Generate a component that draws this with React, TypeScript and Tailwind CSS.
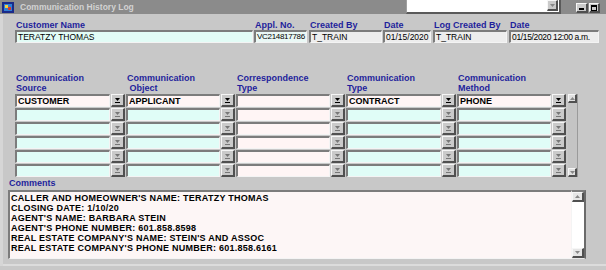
import React from 'react'

const LABEL = 'text-[9px] font-bold leading-[10px] text-[#1f1f9c]'
const SUNKEN = 'border-t-2 border-l-2 border-b border-r border-t-[#7c7c7c] border-l-[#7c7c7c] border-b-[#f4f4f4] border-r-[#f4f4f4]'
const RAISED = 'border-t border-l border-b-2 border-r-2 border-t-[#f6f6f6] border-l-[#f6f6f6] border-b-[#505050] border-r-[#505050] bg-[#cacaca]'

const HEADER_FIELDS = [
    { label: 'Customer Name', value: 'TERATZY THOMAS', ml: 'ml-[12px]', w: 'w-[238px]', bg: 'bg-[#e2fcf6]', text: 'text-[8.5px]' },
    { label: 'Appl. No.', value: 'VC214817786', ml: 'ml-[1px]', w: 'w-[53px]', bg: 'bg-[#eaf8f5]', text: 'text-[8px] tracking-[-0.3px]' },
    { label: 'Created By', value: 'T_TRAIN', ml: 'ml-[2px]', w: 'w-[73px]', bg: 'bg-[#ededed]', text: 'text-[8.5px]' },
    { label: 'Date', value: '01/15/2020', ml: 'ml-[1px]', w: 'w-[48px]', bg: 'bg-[#ededed]', text: 'text-[8.5px]' },
    { label: 'Log Created By', value: 'T_TRAIN', ml: 'ml-[2px]', w: 'w-[74px]', bg: 'bg-[#ededed]', text: 'text-[8.5px]' },
    { label: 'Date', value: '01/15/2020 12:00 a.m.', ml: 'ml-[2px]', w: 'w-[90px]', bg: 'bg-[#ededed]', text: 'text-[8.5px] tracking-[-0.35px]' },
]

const COLUMNS = [
    { top: 'Communication', bottom: 'Source', first: 'CUSTOMER', w: 'w-[111px]', cyan: true },
    { top: 'Communication', bottom: '\u00a0Object', first: 'APPLICANT', w: 'w-[110px]', cyan: true },
    { top: 'Correspondence', bottom: 'Type', first: '', w: 'w-[110px]', cyan: false },
    { top: 'Communication', bottom: 'Type', first: 'CONTRACT', w: 'w-[111px]', cyan: true },
    { top: 'Communication', bottom: 'Method', first: 'PHONE', w: 'w-[110px]', cyan: true },
]

const COMMENTS = [
    "CALLER AND HOMEOWNER'S NAME: TERATZY THOMAS",
    'CLOSING DATE: 1/10/20',
    "AGENT'S NAME: BARBARA STEIN",
    "AGENT'S PHONE NUMBER: 601.858.8598",
    "REAL ESTATE COMPANY'S NAME: STEIN'S AND ASSOC",
    "REAL ESTATE COMPANY'S PHONE NUMBER: 601.858.6161",
]

const DropArrow = ({ active }: { active: boolean }) => (
    <svg width="7" height="7" viewBox="0 0 7 7">
        <path d="M1 1h5L3.5 4z" fill={active ? '#000' : '#777'} />
        <rect x="1" y="5" width="5" height="1" fill={active ? '#000' : '#777'} />
    </svg>
)

const ScrollArrow = ({ up }: { up: boolean }) => (
    <svg width="5" height="3" viewBox="0 0 5 3">
        <path d={up ? 'M0 3h5L2.5 0z' : 'M0 0h5L2.5 3z'} fill="#888" />
    </svg>
)

export default function App() {
    return (
        <div className="relative h-[270px] w-[606px] overflow-hidden bg-[#c8c8c8] font-['Liberation_Sans',Arial,sans-serif]">
            {/* title bar */}
            <div className="flex h-[14px] items-center bg-[#8b8b8b] pl-[2px] pr-[6px]">
                <svg width="12" height="11" viewBox="0 0 12 11">
                    <rect x="0" y="0" width="12" height="11" fill="#1a2a8a" />
                    <rect x="2" y="2" width="8" height="7" fill="#2f7fd6" />
                    <rect x="3" y="3" width="3" height="3" fill="#f4d03a" />
                    <rect x="6" y="5" width="3" height="3" fill="#d83a2a" />
                </svg>
                <span className="ml-[6px] text-[8.5px] font-bold text-[#d2d2d2]">Communication History Log</span>
                <div className="ml-auto flex gap-[1px] pt-[2px]">
                    <div className={`flex h-[10px] w-[12px] items-end justify-center pb-[1px] ${RAISED}`}>
                        <div className="h-[2px] w-[5px] bg-black" />
                    </div>
                    <div className={`flex h-[10px] w-[11px] items-center justify-center ${RAISED}`}>
                        <div className="h-[6px] w-[6px] border border-t-2 border-black" />
                    </div>
                </div>
            </div>

            {/* dropdown list lying over the title bar */}
            <div className="absolute left-[406px] top-0 flex h-[14px] w-[155px] justify-end border-b-2 border-r-2 border-l border-b-[#5a5a5a] border-r-[#5a5a5a] border-l-[#a0a0a0] bg-white pr-[1px]">
                <div className={`flex h-[11px] w-[11px] items-center justify-center ${RAISED}`}>
                    <ScrollArrow up={false} />
                </div>
            </div>

            <div className="border-l-[3px] border-[#d6d6d6]">
                {/* header fields */}
                <div className="flex pt-[4px]">
                    {HEADER_FIELDS.map((f, i) => (
                        <div key={i} className={`${f.ml} ${f.w} flex flex-col`}>
                            <div className={`${LABEL} h-[12px] pl-[1px] pt-[2px]`}>{f.label}</div>
                            <div className={`h-[13px] overflow-hidden whitespace-nowrap pl-[1px] leading-[10px] text-black ${f.text} ${SUNKEN} ${f.bg}`}>
                                {f.value}
                            </div>
                        </div>
                    ))}
                </div>

                {/* grid headers */}
                <div className="mt-[30px] flex pl-[12px]">
                    {COLUMNS.map((c, i) => (
                        <div key={i} className={`${c.w} ${LABEL} pl-[1px]`}>
                            <div>{c.top}</div>
                            <div>{c.bottom}</div>
                        </div>
                    ))}
                </div>

                {/* grid rows */}
                <div className="mt-[1px] flex pl-[12px]">
                    {COLUMNS.map((c, i) => (
                        <div key={i} className={`${c.w} flex flex-col gap-[1px]`}>
                            {[0, 1, 2, 3, 4, 5].map((r) => (
                                <div key={r} className="flex h-[13px] gap-[1px] pr-[1px]">
                                    <div
                                        className={`flex-1 overflow-hidden whitespace-nowrap pl-[1px] text-[9px] font-bold leading-[10px] text-black ${SUNKEN} ${
                                            r === 0 || !c.cyan ? 'bg-[#fff5f5]' : 'bg-[#e0fdf7]'
                                        }`}
                                    >
                                        {r === 0 ? c.first : ''}
                                    </div>
                                    <div className={`flex w-[14px] items-center justify-center ${RAISED}`}>
                                        <DropArrow active={r === 0} />
                                    </div>
                                </div>
                            ))}
                        </div>
                    ))}
                    <div className="ml-[1px] flex h-[83px] w-[10px] flex-col justify-between border-r border-r-[#9a9a9a] bg-[#c4c4c4]">
                        <div className={`flex h-[9px] w-[9px] items-center justify-center ${RAISED} bg-[#e0e0e0]`}>
                            <ScrollArrow up />
                        </div>
                        <div className={`flex h-[9px] w-[9px] items-center justify-center ${RAISED} bg-[#e0e0e0]`}>
                            <ScrollArrow up={false} />
                        </div>
                    </div>
                </div>

                {/* comments */}
                <div className={`${LABEL} mt-[1px] pl-[6px]`}>Comments</div>
                <div className="ml-[5px] mt-[2px] flex h-[69px] w-[578px]">
                    <div className={`flex-1 bg-[#fdf6f6] pl-[1px] pt-[1px] text-[9px] font-bold leading-[10px] text-black ${SUNKEN}`}>
                        {COMMENTS.map((line, i) => (
                            <div key={i} className="whitespace-nowrap tracking-[0.25px]">
                                {line}
                            </div>
                        ))}
                    </div>
                    <div className="flex w-[14px] flex-col justify-between border-r-2 border-b border-t-2 border-t-[#7c7c7c] border-r-[#6a6a6a] border-b-[#e8e8e8] bg-white">
                        <div className={`flex h-[10px] items-center justify-center ${RAISED} bg-[#e6e6e6]`}>
                            <ScrollArrow up />
                        </div>
                        <div className={`flex h-[10px] items-center justify-center ${RAISED} bg-[#e6e6e6]`}>
                            <ScrollArrow up={false} />
                        </div>
                    </div>
                </div>
                <div className="mt-[5px] h-[2px] w-full bg-[#dcdcdc]" />
            </div>
        </div>
    )
}
